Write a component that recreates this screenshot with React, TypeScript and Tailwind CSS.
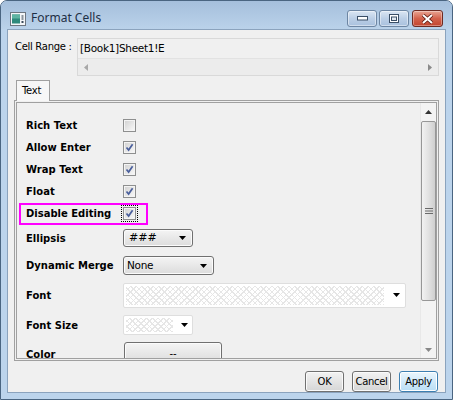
import React from "react";

const hatch =
  "bg-[repeating-linear-gradient(45deg,#e6e6e6_0px,#e6e6e6_1px,transparent_1px,transparent_4px),repeating-linear-gradient(-45deg,#e6e6e6_0px,#e6e6e6_1px,transparent_1px,transparent_4px)]";

const Arrow = () => (
  <svg width="7" height="4" viewBox="0 0 7 4">
    <polygon points="0,0 7,0 3.5,4" fill="#000" />
  </svg>
);

const Check = ({ checked }: { checked: boolean }) => (
  <span className="w-[13px] h-[13px] border border-[#8e8f8f] bg-[#f4f4f4] p-px flex">
    <span className="flex-1 bg-gradient-to-br from-[#d4d4d4] to-[#f7f7f7] flex items-center justify-center">
      {checked && (
        <svg width="9" height="9" viewBox="0 0 9 9">
          <path d="M1.5 4.5 L3.6 7 L7.6 1.2" stroke="#4a5f9c" strokeWidth="1.7" fill="none" />
        </svg>
      )}
    </span>
  </span>
);

const Label = ({ children }: { children: React.ReactNode }) => (
  <span className="w-[97px] shrink-0 font-bold text-[10px] text-black font-['DejaVu_Sans',sans-serif]">
    {children}
  </span>
);

const CaptionBtn = ({ kind }: { kind: "min" | "max" | "close" }) => {
  const red = kind === "close";
  return (
    <div
      className={
        red
          ? "w-[31px] h-[17px] rounded-[3px] border border-[#6d2a22] bg-gradient-to-b from-[#e8a493] via-[#d3624c] to-[#c2432d] flex items-center justify-center shadow-[inset_0_0_0_1px_rgba(255,255,255,0.35)]"
          : "w-[30px] h-[17px] rounded-[3px] border border-[#6d86a3] bg-gradient-to-b from-[#dbe6f3] via-[#bccfe6] to-[#a9c1de] flex items-center justify-center shadow-[inset_0_0_0_1px_rgba(255,255,255,0.45)]"
      }
    >
      {kind === "min" && (
        <svg width="11" height="5" viewBox="0 0 11 5">
          <rect x="0.5" y="0.5" width="10" height="3.5" fill="#fff" stroke="#3a4e66" />
        </svg>
      )}
      {kind === "max" && (
        <svg width="10" height="9" viewBox="0 0 10 9">
          <rect x="0.5" y="0.5" width="9" height="8" fill="#fff" stroke="#3a4e66" />
          <rect x="2.5" y="3" width="5" height="3.5" fill="#dfe6ee" stroke="#3a4e66" />
        </svg>
      )}
      {kind === "close" && (
        <svg width="13" height="10" viewBox="0 0 13 10">
          <path d="M2 1 L11 9 M11 1 L2 9" stroke="#5a1a12" strokeWidth="3.6" />
          <path d="M2 1 L11 9 M11 1 L2 9" stroke="#fff" strokeWidth="2" />
        </svg>
      )}
    </div>
  );
};

const DlgButton = ({ text, primary }: { text: string; primary?: boolean }) => (
  <div
    className={
      primary
        ? "w-[39px] h-[21px] rounded-[3px] border border-[#3c7fb1] bg-gradient-to-b from-[#eaf6fd] to-[#b9def5] flex items-center justify-center text-[10px] font-['DejaVu_Sans',sans-serif] tracking-[-0.3px] shadow-[inset_0_0_0_1px_#fff]"
        : "w-[39px] h-[21px] rounded-[3px] border border-[#707070] bg-gradient-to-b from-[#f2f2f2] to-[#d6d6d6] flex items-center justify-center text-[10px] font-['DejaVu_Sans',sans-serif] tracking-[-0.3px] shadow-[inset_0_0_0_1px_#fafafa]"
    }
  >
    {text}
  </div>
);

export default function App() {
  return (
    <div className="w-[453px] h-[400px] flex flex-col bg-[#bcd4ec] border border-[#4a6581] rounded-t-[7px] overflow-hidden text-black">
      {/* title bar */}
      <div className="h-[28px] shrink-0 flex items-start bg-gradient-to-b from-[#a5bfdc] to-[#bad2ea] pl-[9px] pr-[9px]">
        <svg width="16" height="14" viewBox="0 0 16 14" className="mt-[11px]">
          <rect x="0.5" y="0.5" width="15" height="13" fill="#f4f6f8" stroke="#6d7680" />
          <rect x="2" y="2.5" width="8" height="9" fill="#2f8a7c" />
          <rect x="2" y="2.5" width="8" height="4" fill="#5fb4a2" />
          <rect x="11.5" y="3" width="2" height="5" fill="#8b949c" />
          <rect x="11.5" y="9" width="2" height="2" fill="#3b4a5a" />
        </svg>
        <span className="ml-[5px] mt-[9px] text-[12px] leading-[16px] text-[#1e2f45] font-['Noto_Sans',sans-serif]">
          Format Cells
        </span>
        <div className="ml-auto mt-[9px] flex gap-[2px]">
          <CaptionBtn kind="min" />
          <CaptionBtn kind="max" />
          <div className="ml-px">
            <CaptionBtn kind="close" />
          </div>
        </div>
      </div>

      {/* client area */}
      <div className="mx-[6px] h-[364px] shrink-0 border border-[#8ba3bd] bg-[#f0f0f0] flex flex-col font-['DejaVu_Sans',sans-serif] text-[10px]">
        {/* cell range */}
        <div className="flex pt-[8px] pl-[7px] shrink-0">
          <span className="w-[62px] mt-[2px] leading-[13px] tracking-[-0.3px]">Cell Range :</span>
          <div className="w-[362px] h-[38px] border border-[#d9d9d9] flex flex-col bg-[#f0f0f0]">
            <div className="h-[19px] pl-[2px] flex items-center tracking-[-0.3px] text-[10.5px]">[Book1]Sheet1!E</div>
            <div className="flex-1 border-t border-[#e2e2e2] bg-[#ececec] flex items-center justify-between px-[6px]">
              <svg width="4" height="7" viewBox="0 0 4 7">
                <polygon points="4,0 4,7 0,3.5" fill="#a8a8a8" />
              </svg>
              <svg width="4" height="7" viewBox="0 0 4 7">
                <polygon points="0,0 0,7 4,3.5" fill="#8a8a8a" />
              </svg>
            </div>
          </div>
        </div>

        {/* tab */}
        <div className="mt-[4px] ml-[8px] w-[34px] h-[21px] shrink-0 relative z-10 -mb-px border border-b-0 border-[#a0a0a0] bg-[#f7f7f7] flex items-center pl-[5px] pb-px tracking-[-0.3px]">
          Text
        </div>

        {/* panel */}
        <div className="ml-[6px] w-[425px] h-[261px] shrink-0 border border-[#a0a0a0] p-px">
          <div className="h-full border border-[#a0a0a0] flex overflow-hidden">
            <div className="flex-1 flex flex-col pt-[11px] pl-[9px] overflow-hidden">
              <div className="h-[22px] shrink-0 flex items-center">
                <Label>Rich Text</Label>
                <Check checked={false} />
              </div>
              <div className="h-[22px] shrink-0 flex items-center">
                <Label>Allow Enter</Label>
                <Check checked />
              </div>
              <div className="h-[22px] shrink-0 flex items-center">
                <Label>Wrap Text</Label>
                <Check checked />
              </div>
              <div className="h-[22px] shrink-0 flex items-center">
                <Label>Float</Label>
                <Check checked />
              </div>
              <div className="h-[22px] shrink-0 flex items-center relative">
                <div className="absolute left-[-7px] top-[1px] w-[129px] h-[22px] border-2 border-[#ff00ff]" />
                <Label>Disable Editing</Label>
                <span className="p-px border border-dotted border-black -ml-[2px]">
                  <Check checked />
                </span>
              </div>
              <div className="h-[28px] shrink-0 flex items-center">
                <Label>Ellipsis</Label>
                <div className="w-[70px] h-[18px] rounded-[3px] border border-[#707070] bg-gradient-to-b from-[#f4f4f4] to-[#dcdcdc] flex items-center justify-between pl-[5px] pr-[6px] shadow-[inset_0_0_0_1px_#fbfbfb]">
                  <span className="text-[11px]">###</span>
                  <Arrow />
                </div>
              </div>
              <div className="h-[27px] shrink-0 flex items-center">
                <Label>Dynamic Merge</Label>
                <div className="w-[91px] h-[19px] rounded-[3px] border border-[#707070] bg-gradient-to-b from-[#f4f4f4] to-[#dcdcdc] flex items-center justify-between pl-[3px] pr-[6px] shadow-[inset_0_0_0_1px_#fbfbfb]">
                  <span className="text-[10.5px] tracking-[-0.3px]">None</span>
                  <Arrow />
                </div>
              </div>
              <div className="h-[32px] shrink-0 flex items-center">
                <Label>Font</Label>
                <div className="w-[283px] h-[25px] rounded-[2px] border border-[#dedede] bg-white flex items-center pl-[2px] pr-[5px]">
                  <div className={`w-[258px] h-[19px] ${hatch}`} />
                  <div className="ml-auto">
                    <Arrow />
                  </div>
                </div>
              </div>
              <div className="h-[28px] shrink-0 flex items-center">
                <Label>Font Size</Label>
                <div className="w-[70px] h-[20px] rounded-[2px] border border-[#dedede] bg-white flex items-center pl-[2px] pr-[4px]">
                  <div className={`w-[47px] h-[14px] ${hatch}`} />
                  <div className="ml-auto">
                    <Arrow />
                  </div>
                </div>
              </div>
              <div className="h-[30px] shrink-0 flex items-center">
                <Label>Color</Label>
                <div className="self-start mt-[3px] ml-px w-[98px] h-[22px] rounded-t-[3px] border border-[#707070] bg-gradient-to-b from-[#f4f4f4] to-[#dcdcdc] flex items-center justify-center shadow-[inset_0_0_0_1px_#fbfbfb]">
                  --
                </div>
              </div>
            </div>

            {/* vertical scrollbar */}
            <div className="w-[16px] shrink-0 bg-[#f3f3f3] border-l border-[#e8e8e8] flex flex-col items-stretch">
              <div className="h-[18px] shrink-0 flex items-center justify-center">
                <svg width="7" height="4" viewBox="0 0 7 4">
                  <polygon points="3.5,0 7,4 0,4" fill="#333" />
                </svg>
              </div>
              <div className="h-[180px] shrink-0 rounded-[2px] border border-[#979797] bg-gradient-to-r from-[#f2f2f2] via-[#e2e2e2] to-[#cfcfcf] flex items-center justify-center">
                <svg width="8" height="8" viewBox="0 0 8 8">
                  <path d="M0 1.5 H8 M0 4 H8 M0 6.5 H8" stroke="#6a6a6a" strokeWidth="1" />
                </svg>
              </div>
              <div className="flex-1" />
              <div className="h-[16px] shrink-0 flex items-center justify-center">
                <svg width="7" height="4" viewBox="0 0 7 4">
                  <polygon points="0,0 7,0 3.5,4" fill="#888" />
                </svg>
              </div>
            </div>
          </div>
        </div>

        {/* buttons */}
        <div className="mt-[10px] flex justify-end gap-[8px] pr-[7px] shrink-0">
          <DlgButton text="OK" />
          <DlgButton text="Cancel" />
          <DlgButton text="Apply" primary />
        </div>
      </div>
    </div>
  );
}
